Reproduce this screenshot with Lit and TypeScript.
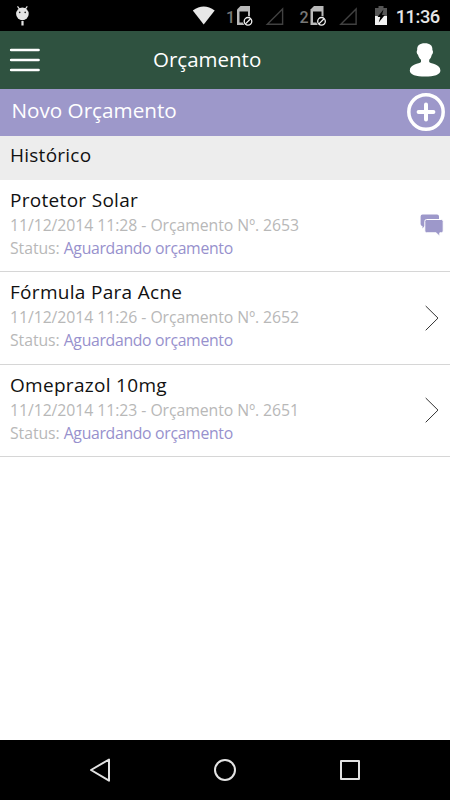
import { LitElement, html, css, svg } from "lit";
import { customElement } from "lit/decorators.js";

interface Quote { title: string; date: string; id: string; chat?: boolean }

const quotes: Quote[] = [
  { title: "Protetor Solar", date: "11/12/2014 11:28", id: "2653", chat: true },
  { title: "Fórmula Para Acne", date: "11/12/2014 11:26", id: "2652" },
  { title: "Omeprazol 10mg", date: "11/12/2014 11:23", id: "2651" },
];

const sim = (x: number) => svg`
  <path d="M${x} 9.5 L${x + 3.5} 6 H${x + 13} V25 H${x} Z" fill="#b9b9b9"/>
  <rect x=${x + 2.5} y="11.5" width="8.5" height="11" fill="#000"/>
  <circle cx=${x + 11} cy="21.3" r="5.2" fill="#000"/>
  <circle cx=${x + 11} cy="21.3" r="3.8" fill="none" stroke="#f2f2f2" stroke-width="1.3"/>
  <path d="M${x + 8.4} 23.9 l5.2 -5.2" stroke="#f2f2f2" stroke-width="1.3"/>`;

const signal = (x: number) => svg`<path d="M${x} 24.3 H${x + 15.3} V9 Z" fill="none" stroke="#414141" stroke-width="1.4"/>`;

@customElement("app-root")
export class AppRoot extends LitElement {
  static styles = css`
    :host { display: flex; flex-direction: column; height: 800px; width: 450px; overflow: hidden; background: #fff; font-family: "Open Sans", "Noto Sans", sans-serif; }
    svg { display: block; flex: none; }
    .system { height: 31px; background: #000; flex: none; }
    .system text { font-family: Roboto, sans-serif; }
    .bar { height: 57.5px; background: #2f5240; color: #fff; display: grid; grid-template-columns: 60px 1fr 60px; align-items: center; flex: none; }
    .bar h1 { margin: 0; font-size: 20.5px; font-weight: 400; line-height: 28px; padding: 0 0 2px 93px; white-space: nowrap; }
    .new { height: 47.5px; background: #9d98ca; color: #fff; display: flex; align-items: center; justify-content: space-between; padding: 0 4px 0 11.4px; flex: none; font-size: 20.7px; }
    .new span { line-height: 28px; padding-bottom: 5px; }
    .history { height: 44px; background: #ededed; color: #111; padding: 0 10px; flex: none; font-size: 19px; line-height: 38px; letter-spacing: 0.25px; }
    .list { flex: 1; }
    .row { box-sizing: border-box; height: 92.5px; border-bottom: 1px solid #d6d6d6; padding: 7.2px 5px 0 10px; display: flex; justify-content: space-between; white-space: nowrap; }
    .row:first-child { height: 92.3px; }
    .title { font-size: 19px; line-height: 27px; color: #111; letter-spacing: 0.3px; }
    .line { font-size: 15.8px; line-height: 22.6px; color: #b8b8b8; letter-spacing: -0.06px; }
    .line b { font-weight: 400; color: #9791cd; letter-spacing: -0.32px; }
    .row svg { margin-top: 21.4px; }
    .nav { height: 60px; background: #000; flex: none; }
  `;

  render() {
    return html`
      <div class="system">
        <svg width="450" height="31">
          <g fill="#e4e4e4"><circle cx="22.4" cy="13.9" r="6.3"/><path d="M17.5 6.3 l3 4 M27.3 6.3 l-3 4" stroke="#e4e4e4" stroke-width="1.2"/><rect x="21.4" y="21" width="2.2" height="4.5"/></g>
          <g fill="#222"><circle cx="19.7" cy="12.4" r=".8"/><circle cx="25.2" cy="12.4" r=".8"/></g>
          <path d="M192.8 10.6 Q203.7 2.6 214.7 10.6 L203.7 24.5 Z" fill="#e8e8e8"/>
          <text x="226" y="22.8" font-size="16" font-weight="500" fill="#777">1</text>${sim(237)}${signal(267.3)}
          <text x="299.5" y="22.8" font-size="16" font-weight="500" fill="#777">2</text>${sim(310.5)}${signal(340.8)}
          <path d="M375 8 h3.5 V6 h5 V8 H387 V16 H375 Z" fill="#555"/><rect x="375" y="16" width="12" height="9" fill="#f2f2f2"/>
          <path d="M383.5 9.5 L377.5 17 H380.3 L378.7 22.5 L384.8 15 H382 Z" fill="#000"/>
          <text x="395.7" y="23" font-size="18.3" font-weight="500" fill="#e6e6e6" textLength="44.5">11:36</text>
        </svg>
      </div>
      <header class="bar">
        <svg width="60" height="57"><path d="M11.2 19 H38.5 M11.2 29 H38.5 M11.2 39 H38.5" stroke="#fff" stroke-width="2.7" stroke-linecap="round"/></svg>
        <h1>Orçamento</h1>
        <svg width="60" height="57" viewBox="390 31 60 57"><path d="M424.8 43.3 C430 43.3 432.6 45.5 432.4 50 C433.6 51.5 432.8 54 431.8 54.7 C431.3 57 430.5 58.5 429.2 59.8 V62 C431 64 440.4 64 440.4 70.5 C440.4 74.8 434 76.6 425.1 76.6 C416.2 76.6 409.8 74.8 409.8 70.5 C409.8 64 419.3 64 421 62 V59.8 C419.4 58.3 418.5 56.8 418 54.7 C416.9 54 416.1 51.5 417.2 50 C417 45.5 419.6 43.3 424.8 43.3 Z" fill="#fff"/></svg>
      </header>
      <div class="new"><span>Novo Orçamento</span>
        <svg width="40" height="40"><circle cx="20" cy="20" r="17.2" fill="none" stroke="#fff" stroke-width="3.5"/><path d="M20 12.6 V27.4 M12.6 20 H27.4" stroke="#fff" stroke-width="4" stroke-linecap="round"/></svg>
      </div>
      <div class="history">Histórico</div>
      <div class="list">
        ${quotes.map((q) => html`<div class="row">
          <div>
            <div class="title">${q.title}</div>
            <div class="line">${q.date} - Orçamento Nº. ${q.id}</div>
            <div class="line">Status: <b>Aguardando orçamento</b></div>
          </div>
          ${q.chat
            ? html`<svg width="27" height="34" viewBox="418 209 27 34"><path d="M422.5 214.5 H437 Q439 214.5 439 216.5 V226 H424.5 L422.5 228.5 V226 Q420.6 226 420.6 224 V216.5 Q420.6 214.5 422.5 214.5 Z" fill="#9d98ca"/><path d="M426.6 219.5 H441.4 Q443.2 219.5 443.2 221.3 V231 Q443.2 232.8 441.4 232.8 H439.8 V236.3 L436 232.8 H426.6 Q424.8 232.8 424.8 231 V221.3 Q424.8 219.5 426.6 219.5 Z" fill="#9d98ca" stroke="#fff" stroke-width="1"/></svg>`
            : html`<svg width="27" height="34" viewBox="418 301 27 34"><path d="M425.7 306 L438 318.1 L425.7 330.3" fill="none" stroke="#333" stroke-width="1"/></svg>`}
        </div>`)}
      </div>
      <div class="nav">
        <svg width="450" height="60" fill="none" stroke="#e3e3e3" stroke-width="2" stroke-linejoin="round"><path d="M109 19.5 V40.7 L91 30 Z"/><circle cx="225" cy="30" r="10"/><rect x="341" y="21" width="18" height="18"/></svg>
      </div>`;
  }
}
